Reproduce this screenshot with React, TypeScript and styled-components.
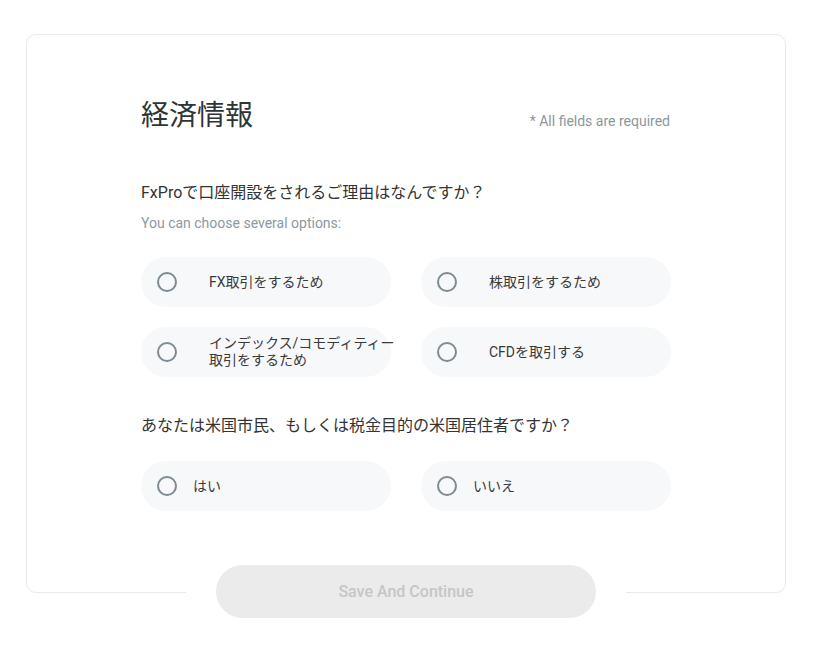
import React, { useState } from 'react';
import styled, { createGlobalStyle } from 'styled-components';

const GlobalStyle = createGlobalStyle`
  body {
    margin: 0;
    background: #ffffff;
    font-family: Roboto, "Noto Sans CJK JP", sans-serif;
    color: #333333;
  }
`

const Page = styled.div`
  padding: 34px 0 0 26px;
`

const Card = styled.section`
  width: 760px;
  box-sizing: border-box;
  border: 1px solid #e8eaee;
  border-radius: 10px;
  padding: 64px 0 81px;
`

const Content = styled.div`
  width: 529px;
  margin-left: 114px;
`

const Header = styled.div`
  display: flex;
  justify-content: space-between;
  align-items: flex-end;
`

const Title = styled.h1`
  margin: 0;
  font-size: 28px;
  line-height: 34px;
  font-weight: 400;
  color: #2f3437;
`

const Required = styled.span`
  margin-bottom: 2px;
  font-size: 14px;
  line-height: 20px;
  color: #8a979c;
`

const Question = styled.p<{ $top: number }>`
  margin: ${p => p.$top}px 0 0;
  font-size: 16px;
  line-height: 22px;
  color: #333333;
`

const Hint = styled.p`
  margin: 9px 0 0;
  font-size: 14px;
  line-height: 20px;
  color: #8c999e;
`

const Options = styled.div<{ $top: number }>`
  display: grid;
  grid-template-columns: 250px 250px;
  column-gap: 30px;
  row-gap: 20px;
  margin-top: ${p => p.$top}px;
`

const Option = styled.label`
  display: flex;
  align-items: center;
  height: 50px;
  padding-left: 16px;
  border-radius: 25px;
  background: #f7f8fa;
  cursor: pointer;
  overflow: visible;
`

const Radio = styled.span<{ $checked: boolean }>`
  flex-shrink: 0;
  width: 20px;
  height: 20px;
  box-sizing: border-box;
  border-radius: 50%;
  border: 2px solid #7d8b92;
  background: ${p => (p.$checked ? 'radial-gradient(circle, #7d8b92 0 4px, transparent 5px)' : 'transparent')};
`

const OptionText = styled.span<{ $wide: boolean }>`
  flex-shrink: 0;
  margin-left: ${p => (p.$wide ? '32px' : '16px')};
  width: ${p => (p.$wide ? '190px' : 'auto')};
  font-size: 14px;
  line-height: 17px;
  color: #3a3a3a;
`

const Footer = styled.div`
  display: flex;
  justify-content: center;
  width: 760px;
  margin-top: -28px;
`

const ButtonWrap = styled.div`
  padding: 0 30px;
  background: #ffffff;
`

const SaveButton = styled.button`
  width: 380px;
  height: 53px;
  border: none;
  border-radius: 27px;
  background: #ebebeb;
  color: #c6c6c6;
  font-family: Roboto, sans-serif;
  font-size: 16px;
  font-weight: 500;
  cursor: not-allowed;
`

const reasons = [
  'FX取引をするため',
  '株取引をするため',
  'インデックス/コモディティー取引をするため',
  'CFDを取引する',
]

const answers = ['はい', 'いいえ']

export default function App() {
  const [picked, setPicked] = useState<string[]>([])
  const [usPerson, setUsPerson] = useState<string | null>(null)

  const toggle = (r: string) =>
    setPicked(prev => (prev.includes(r) ? prev.filter(x => x !== r) : [...prev, r]))

  return (
    <Page>
      <GlobalStyle />
      <Card>
        <Content>
          <Header>
            <Title>経済情報</Title>
            <Required>* All fields are required</Required>
          </Header>

          <Question $top={49}>FxProで口座開設をされるご理由はなんですか？</Question>
          <Hint>You can choose several options:</Hint>
          <Options $top={24}>
            {reasons.map(r => (
              <Option key={r} onClick={() => toggle(r)}>
                <Radio $checked={picked.includes(r)} />
                <OptionText $wide>{r}</OptionText>
              </Option>
            ))}
          </Options>

          <Question $top={38}>あなたは米国市民、もしくは税金目的の米国居住者ですか？</Question>
          <Options $top={24}>
            {answers.map(a => (
              <Option key={a} onClick={() => setUsPerson(a)}>
                <Radio $checked={usPerson === a} />
                <OptionText $wide={false}>{a}</OptionText>
              </Option>
            ))}
          </Options>
        </Content>
      </Card>
      <Footer>
        <ButtonWrap>
          <SaveButton disabled>Save And Continue</SaveButton>
        </ButtonWrap>
      </Footer>
    </Page>
  )
}
